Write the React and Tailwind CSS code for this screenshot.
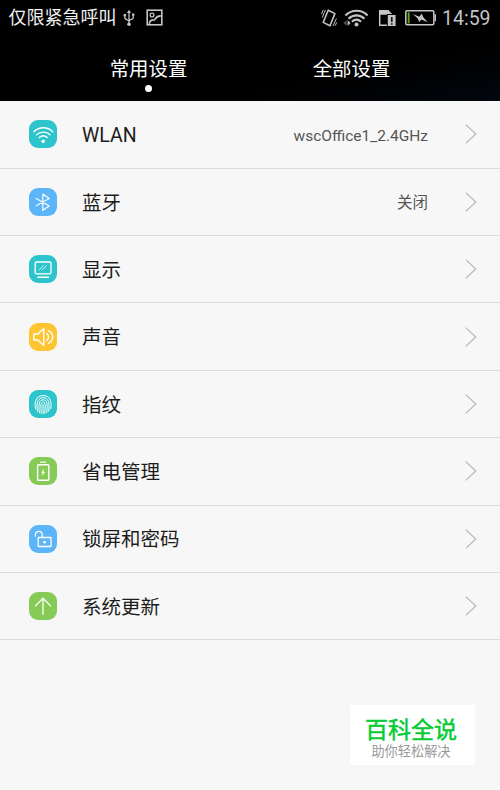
const WlanIcon = () => (
  <>
    <path d="M4.9 11.7C10.2 6.5 18.4 6.5 23.7 11.7" />
    <path d="M7.6 14.7c3.7-3.5 9.7-3.5 13.4 0" />
    <path d="M10.4 17.5c2.3-2.1 5.5-2.1 7.8 0" />
    <circle cx="14.2" cy="21.2" r="1.8" fill="#fff" stroke="none" />
  </>
);

const BluetoothIcon = () => (
  <path d="M7.3 10.4 20.2 17.9 13.8 22.3V6.1L20.2 10.6 7.3 17.8" strokeWidth="1.2" />
);

const DisplayIcon = () => (
  <>
    <rect x="6.2" y="7" width="15.8" height="11.8" rx="1.2" strokeWidth="1.3" />
    <path d="M8.8 22.2h10.6" strokeWidth="1.4" />
    <path d="M10.3 14.8l4.2-4.2M13.4 14.8l4.2-4.2" strokeWidth=".8" />
  </>
);

const SoundIcon = () => (
  <>
    <path d="M4.8 11h4l6-5.4v16.8l-6-5.4h-4z" />
    <path d="M17.8 10.6c2.4 1.7 2.4 5.1 0 6.8" />
    <path d="M19.3 7.7c5.8 2.4 5.8 10.2 0 12.6" />
  </>
);

const FingerprintIcon = () => (
  <g strokeWidth="1">
    <path d="M6.6 18.8c-.8-4-.6-6.5.2-8.4C8.2 7 11 5.5 14.2 5.5s6 1.5 7.2 5c.9 2.3.9 5 .2 8.3" />
    <path d="M8.5 21.4c-.6-3.6-.8-7.5.2-10 1-2.4 3.2-3.8 5.5-3.8s4.3 1.3 5.2 3.8c.9 2.6.7 6.1.2 9.8" />
    <path d="M10.4 22.8c-.5-3.8-.6-7.8 0-9.9.6-2 2-3.1 3.8-3.1s3.1 1.1 3.6 3.1c.6 2.2.4 6-.1 9.7" />
    <path d="M12.3 23.5c-.4-3.6-.6-7.5-.2-9.2.3-1.5 1-2.3 2.1-2.3s1.6.8 1.8 2.3c.4 2 .1 5.8-.3 9.2" />
    <path d="M14.1 14.4v9" />
  </g>
);

const BatteryIcon = () => (
  <>
    <rect x="8.6" y="7.8" width="11.2" height="15.4" rx=".8" strokeWidth="1.4" />
    <path d="M11.6 5.1h5.2" strokeWidth="1.2" />
    <path d="M15.2 11.8l-3.2 4h1.6l-.8 3.3 3.4-4.2h-1.7z" fill="#fff" stroke="none" />
  </>
);

const LockIcon = () => (
  <>
    <rect x="9.2" y="12.5" width="12.8" height="9" rx=".4" strokeWidth="1.3" />
    <path d="M6.4 11.2V9.8c0-4.6 6.8-4.6 6.8 0v2.5" strokeWidth="1.3" />
    <circle cx="15.6" cy="17.2" r="1.4" fill="#fff" stroke="none" />
  </>
);

const UpdateIcon = () => <path d="M14 22.2V6.3M6.4 13.9 14 6.3l7.6 7.6" strokeWidth="1.3" />;

const items = [
  { label: 'WLAN', value: 'wscOffice1_2.4GHz', color: 'bg-[#2dc4cb]', Icon: WlanIcon },
  { label: '蓝牙', value: '关闭', color: 'bg-[#5bb5f8]', Icon: BluetoothIcon },
  { label: '显示', color: 'bg-[#2dc4cb]', Icon: DisplayIcon },
  { label: '声音', color: 'bg-[#ffc530]', Icon: SoundIcon },
  { label: '指纹', color: 'bg-[#2dc4cb]', Icon: FingerprintIcon },
  { label: '省电管理', color: 'bg-[#86cb56]', Icon: BatteryIcon },
  { label: '锁屏和密码', color: 'bg-[#5bb5f8]', Icon: LockIcon },
  { label: '系统更新', color: 'bg-[#86cb56]', Icon: UpdateIcon },
];

function StatusBar() {
  return (
    <div className="flex h-[35px] items-center pl-[8.5px] pr-[9px] text-[#c4c4c4]">
      <span className="text-[18px] leading-none text-[#f0f0f0]">仅限紧急呼叫</span>
      {/* USB */}
      <svg className="ml-[6px] h-[18px] w-[12px]" viewBox="0 0 12 18" fill="none" stroke="currentColor" strokeWidth="1.3">
        <path d="M6 3v12M1.8 6.5v2.6c0 1.6 4.2 1.4 4.2 3.4M10.2 6v3c0 1.8-4.2 1.6-4.2 3" />
        <path d="M6 .8 8.1 4H3.9zM.6 4.9h2.5v2.4H.6zM9 4.4h2.4v2.4H9z" fill="currentColor" stroke="none" />
        <circle cx="6" cy="15.2" r="1.8" fill="currentColor" stroke="none" />
      </svg>
      {/* Screenshot */}
      <svg className="ml-[11px] h-[17px] w-[17px]" viewBox="0 0 17 17" fill="none" stroke="currentColor" strokeWidth="1.3">
        <rect x="1.2" y="1.2" width="14.6" height="14.6" strokeWidth="1.6" />
        <circle cx="6" cy="6" r="1.9" />
        <path d="M3.3 14.8c.3-2.4 1.6-4 3.4-3.7 1.4.2 1.8.2 2.6-1.3C10.4 7.8 12 6.8 14.8 6.8" strokeWidth="1.7" />
      </svg>

      <div className="ml-auto flex items-center">
        {/* Vibrate */}
        <svg className="h-[18px] w-[16px]" viewBox="0 0 16 18" fill="none" stroke="currentColor" strokeWidth="1.6">
          <path d="M7.2 1.2 13.9 4.6 9 16.8 2.2 13.4z" strokeLinejoin="round" />
          <path d="M4.4 1 1.2 8.6M2.2 1 .5 5M15.4 9.6 12 17M15.7 13.4l-1.5 3.3" strokeWidth="1" />
        </svg>
        {/* Wi-Fi */}
        <svg className="ml-[6px] h-[18px] w-[26px]" viewBox="0 0 26 18" fill="none" stroke="currentColor" strokeWidth="2.1">
          <path d="M2.4 6.5c6.6-6.3 16-6.3 22.2 0M5.5 9.7c4.9-4.5 11.2-4.5 16 0M8.9 12.7c2.8-2.5 6.4-2.5 9.2 0" />
          <circle cx="13.5" cy="15.6" r="2" fill="currentColor" stroke="none" />
          <path d="M3.6 11.2v5.6L.4 14z" fill="#555" stroke="none" />
          <path d="M4.6 11.2v5.6L7.6 14z" fill="currentColor" stroke="none" />
        </svg>
        {/* SIM warning */}
        <svg className="ml-[9px] h-[18px] w-[18px]" viewBox="0 0 18 18">
          <path d="M1.7 1.7h8.1l4.1 4.1v10.4H1.7z" fill="none" stroke="currentColor" strokeWidth="1.5" />
          <path d="M1 1h9l4.5 4.8H1z" fill="currentColor" />
          <path d="M8.8 5h9v12h-9z" fill="#000" />
          <path d="M9.8 6h7.8v11H9.8z" fill="currentColor" />
          <path d="M12.9 8h1.7v5h-1.7zM12.9 14.2h1.7v1.6h-1.7z" fill="#111" />
        </svg>
        {/* Battery */}
        <svg className="ml-[9px] h-[18px] w-[31px]" viewBox="0 0 31 18">
          <rect x=".8" y="1.8" width="28" height="14" rx="1.2" fill="none" stroke="currentColor" strokeWidth="1.5" />
          <path d="M29.5 5.2h1.5v7h-1.5z" fill="currentColor" />
          <path d="M2.7 3.4h1.9v11H2.7z" fill="#62a41c" />
          <path d="M7.8 5l6.6 2.7 2.2-3.2 1.7 3.8 4.4 5-6.4-2.8-2 2.5-1.8-3.8z" fill="currentColor" />
        </svg>
        <span className="ml-[6.5px] w-[49px] whitespace-nowrap pt-[3px] text-[19.5px] leading-none">14:59</span>
      </div>
    </div>
  );
}

function SettingRow({ label, value, color, Icon }) {
  return (
    <li className="flex h-[67.4px] items-center border-b border-[#dcdcdc] pl-[29px] pr-[23px]">
      <span className={`flex h-7 w-7 shrink-0 rounded-[9px] ${color}`}>
        <svg className="h-7 w-7" viewBox="0 0 28 28" fill="none" stroke="#fff" strokeWidth="1.4" strokeLinecap="round" strokeLinejoin="round">
          <Icon />
        </svg>
      </span>
      <span className="ml-[25px] pt-[3px] text-[19.5px] leading-none text-[#1c1c1c]">{label}</span>
      {value && <span className="ml-auto pt-[4px] text-[15.5px] leading-none text-[#555]">{value}</span>}
      <svg className={`${value ? 'ml-[37px]' : 'ml-auto'} h-[20px] w-[12px]`} viewBox="0 0 12 20" fill="none" stroke="#b8b8b8" strokeWidth="1.2">
        <path d="M.8.6 10.8 10 .8 19.4" />
      </svg>
    </li>
  );
}

export default function App() {
  return (
    <div className="relative h-[790px] w-[500px] overflow-hidden bg-[#f7f7f7] font-[Roboto,'Noto_Sans_CJK_SC',sans-serif]">
      <header className="h-[101px] bg-linear-to-br from-black from-55% to-[#020810]">
        <StatusBar />
        <nav className="flex h-[66px] pl-[47px] text-[19.4px] leading-none text-white">
          <div className="flex w-[203px] flex-col items-center pt-[25px]">
            <span>常用设置</span>
            <span className="mt-[6px] h-[7px] w-[7px] rounded-full bg-white" />
          </div>
          <div className="flex w-[203px] flex-col items-center pt-[25px]">
            <span>全部设置</span>
          </div>
        </nav>
      </header>

      <ul className="pt-[0.2px]">
        {items.map((item) => (
          <SettingRow key={item.label} {...item} />
        ))}
      </ul>

      {/* Watermark */}
      <div className="absolute left-[350px] top-[705px] flex h-[60px] w-[125px] flex-col items-center bg-white pt-[14px] pr-[3px] leading-none">
        <span className="text-[23px] leading-[24px] text-[#06cb35] [-webkit-text-stroke:0.5px]">百科全说</span>
        <span className="mt-[2px] text-[13.2px] leading-[13px] text-[#999]">助你轻松解决</span>
      </div>
    </div>
  );
}
